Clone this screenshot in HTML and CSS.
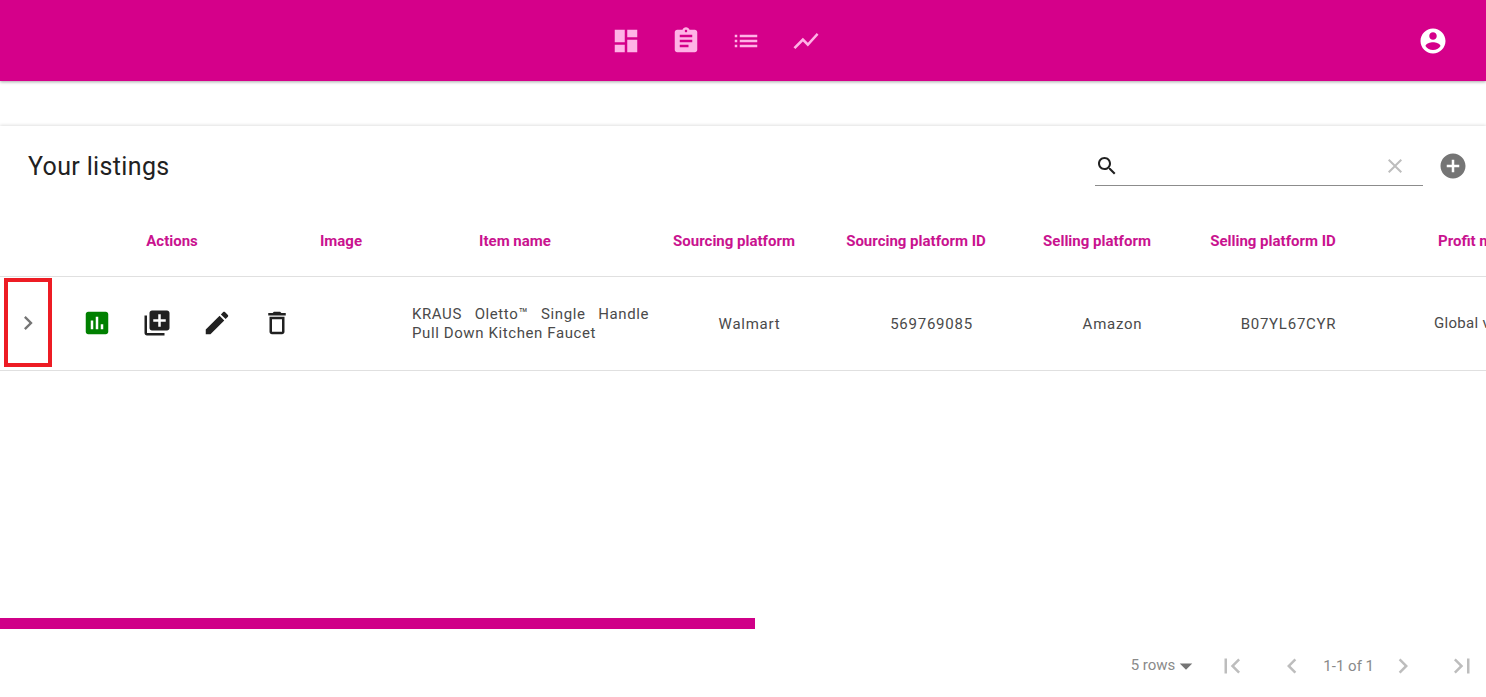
FILE: index.html
```html
<!DOCTYPE html>
<html lang="en">
<head>
    <meta charset="UTF-8">
    <meta name="viewport" content="width=device-width, initial-scale=1.0">
    <title>Your listings</title>
    <link rel="stylesheet" href="styles.css">
</head>
<body>
    <header class="navbar">
        <nav class="nav-links">
            <svg class="icon-lg" viewBox="0 0 24 24"><path d="M3 13h8V3H3v10zm0 8h8v-6H3v6zm10 0h8V11h-8v10zm0-18v6h8V3h-8z"/></svg>
            <svg class="icon-lg" viewBox="0 0 24 24"><path d="M19 3h-4.18C14.4 1.84 13.3 1 12 1c-1.3 0-2.4.84-2.82 2H5c-1.1 0-2 .9-2 2v14c0 1.1.9 2 2 2h14c1.1 0 2-.9 2-2V5c0-1.1-.9-2-2-2zm-7 0c.55 0 1 .45 1 1s-.45 1-1 1-1-.45-1-1 .45-1 1-1zm2 14H7v-2h7v2zm3-4H7v-2h10v2zm0-4H7V7h10v2z"/></svg>
            <svg class="icon-lg" viewBox="0 0 24 24"><path d="M3 13h2v-2H3v2zm0 4h2v-2H3v2zm0-8h2V7H3v2zm4 4h14v-2H7v2zm0 4h14v-2H7v2zM7 7v2h14V7H7z"/></svg>
            <svg class="icon-lg" viewBox="0 0 24 24"><path d="M3.5 18.49l6-6.01 4 4L22 6.92l-1.41-1.41-7.09 7.97-4-4L2 16.99z"/></svg>
        </nav>
        <svg class="icon-lg account-icon" viewBox="0 0 24 24"><path d="M12 2C6.48 2 2 6.48 2 12s4.48 10 10 10 10-4.48 10-10S17.52 2 12 2zm0 3c1.66 0 3 1.34 3 3s-1.34 3-3 3-3-1.34-3-3 1.34-3 3-3zm0 14.2c-2.5 0-4.71-1.28-6-3.22.03-1.99 4-3.08 6-3.08 1.99 0 5.97 1.09 6 3.08-1.29 1.94-3.5 3.22-6 3.22z"/></svg>
    </header>

    <main class="paper">
        <div class="toolbar">
            <h2 class="title">Your listings</h2>
            <div class="search-box">
                <svg class="icon" viewBox="0 0 24 24"><path d="M15.5 14h-.79l-.28-.27C15.41 12.59 16 11.11 16 9.5 16 5.91 13.09 3 9.5 3S3 5.91 3 9.5 5.91 16 9.5 16c1.61 0 3.09-.59 4.23-1.57l.27.28v.79l5 4.99L20.49 19l-4.99-5zm-6 0C7.01 14 5 11.99 5 9.5S7.01 5 9.5 5 14 7.01 14 9.5 11.99 14 9.5 14z"/></svg>
                <svg class="icon clear-icon" viewBox="0 0 24 24"><path d="M19 6.41L17.59 5 12 10.59 6.41 5 5 6.41 10.59 12 5 17.59 6.41 19 12 13.41 17.59 19 19 17.59 13.41 12z"/></svg>
            </div>
            <svg class="icon-lg add-icon" viewBox="0 0 24 24"><path d="M12 2C6.48 2 2 6.48 2 12s4.48 10 10 10 10-4.48 10-10S17.52 2 12 2zm5 11h-4v4h-2v-4H7v-2h4V7h2v4h4v2z"/></svg>
        </div>

        <div class="table-wrap">
            <table class="listings">
                <colgroup>
                    <col class="col-expand">
                    <col class="col-actions">
                    <col class="col-image">
                    <col class="col-name">
                    <col class="col-sourcing">
                    <col class="col-sourcing-id">
                    <col class="col-selling">
                    <col class="col-selling-id">
                    <col class="col-profit">
                </colgroup>
                <thead>
                    <tr>
                        <th></th>
                        <th>Actions</th>
                        <th>Image</th>
                        <th class="head-name">Item name</th>
                        <th class="head-shift">Sourcing platform</th>
                        <th class="head-shift">Sourcing platform ID</th>
                        <th class="head-shift">Selling platform</th>
                        <th class="head-shift">Selling platform ID</th>
                        <th class="head-profit">Profit margin</th>
                    </tr>
                </thead>
                <tbody>
                    <tr>
                        <td class="cell-expand">
                            <svg class="icon-expand" viewBox="0 0 24 24"><path d="M10 6L8.59 7.41 13.17 12l-4.58 4.59L10 18l6-6z"/></svg>
                            <span class="highlight-box"></span>
                        </td>
                        <td>
                            <div class="row-actions">
                                <svg class="icon-lg stats-icon" viewBox="0 0 24 24"><path d="M19 3H5c-1.1 0-2 .9-2 2v14c0 1.1.9 2 2 2h14c1.1 0 2-.9 2-2V5c0-1.1-.9-2-2-2zM9 17H7v-7h2v7zm4 0h-2V7h2v10zm4 0h-2v-4h2v4z"/></svg>
                                <svg class="icon-lg" viewBox="0 0 24 24"><path d="M4 6H2v14c0 1.1.9 2 2 2h14v-2H4V6zm16-4H8c-1.1 0-2 .9-2 2v12c0 1.1.9 2 2 2h12c1.1 0 2-.9 2-2V4c0-1.1-.9-2-2-2zm-1 9h-4v4h-2v-4H9V9h4V5h2v4h4v2z"/></svg>
                                <svg class="icon-lg" viewBox="0 0 24 24"><path d="M3 17.25V21h3.75L17.81 9.94l-3.75-3.75L3 17.25zM20.71 7.04c.39-.39.39-1.02 0-1.41l-2.34-2.34c-.39-.39-1.02-.39-1.41 0l-1.83 1.83 3.75 3.75 1.83-1.83z"/></svg>
                                <svg class="icon-lg" viewBox="0 0 24 24"><path d="M6 19c0 1.1.9 2 2 2h8c1.1 0 2-.9 2-2V7H6v12zM8 9h8v10H8V9zm7.5-5l-1-1h-5l-1 1H5v2h14V4z"/></svg>
                            </div>
                        </td>
                        <td></td>
                        <td class="cell-text cell-name">KRAUS Oletto™ Single Handle Pull Down Kitchen Faucet</td>
                        <td class="cell-text">Walmart</td>
                        <td class="cell-text">569769085</td>
                        <td class="cell-text">Amazon</td>
                        <td class="cell-text">B07YL67CYR</td>
                        <td class="cell-profit">Global value</td>
                    </tr>
                </tbody>
            </table>
        </div>

        <div class="scroll-track"><div class="scroll-thumb"></div></div>

        <div class="pagination">
            <span class="rows-select">5 rows</span>
            <svg class="icon-lg icon-drop" viewBox="0 0 24 24"><path d="M7 10l5 5 5-5z"/></svg>
            <svg class="icon-lg page-first" viewBox="0 0 24 24"><path d="M18.41 16.59L13.82 12l4.59-4.59L17 6l-6 6 6 6zM6 6h2v12H6z"/></svg>
            <svg class="icon-lg page-prev" viewBox="0 0 24 24"><path d="M15.41 7.41L14 6l-6 6 6 6 1.41-1.41L10.83 12z"/></svg>
            <span class="page-info">1-1 of 1</span>
            <svg class="icon-lg page-next" viewBox="0 0 24 24"><path d="M10 6L8.59 7.41 13.17 12l-4.58 4.59L10 18l6-6z"/></svg>
            <svg class="icon-lg page-last" viewBox="0 0 24 24"><path d="M5.59 7.41L10.18 12l-4.59 4.59L7 18l6-6-6-6zM16 6h2v12h-2z"/></svg>
        </div>
    </main>
</body>
</html>
```

FILE: styles.css
```css
:root {
    --primary: #d5008a;
    --nav-icon: #ffb3e6;
    --heading: #c9138f;
    --text-primary: #212121;
    --text-body: #4a4a4a;
    --text-muted: #8a8a8a;
    --border: #e0e0e0;
}

* {
    box-sizing: border-box;
    margin: 0;
    padding: 0;
}

body {
    font-family: Roboto, "Liberation Sans", sans-serif;
    background-color: #ffffff;
    color: var(--text-primary);
    height: 100vh;
    overflow: hidden;
}

svg {
    display: block;
    flex: none;
    fill: currentColor;
}

.icon {
    width: 24px;
    height: 24px;
}

.icon-lg {
    width: 30px;
    height: 30px;
}

/* Top bar */
.navbar {
    height: 81px;
    background-color: var(--primary);
    box-shadow: 0 1px 3px rgba(0,0,0,0.35);
    display: flex;
    align-items: center;
    justify-content: center;
    position: relative;
}

.nav-links {
    display: flex;
    gap: 30px;
    color: var(--nav-icon);
    margin-left: -54px;
}

.account-icon {
    position: absolute;
    right: 38px;
    top: 26px;
    color: #ffffff;
}

/* Card */
.paper {
    margin-top: 45px;
    height: 571px;
    box-shadow: 0 -1px 3px rgba(0,0,0,0.12);
    display: flex;
    flex-direction: column;
}

.toolbar {
    height: 80px;
    padding: 0 18px 0 28px;
    display: flex;
    align-items: center;
    flex: none;
}

.title {
    font-size: 25px;
    font-weight: 400;
    letter-spacing: 0.35px;
    flex: 1;
    padding-top: 1px;
}

.search-box {
    width: 328px;
    height: 38px;
    margin-top: 2px;
    border-bottom: 1px solid #8c8c8c;
    display: flex;
    align-items: center;
    justify-content: space-between;
    padding: 0 16px 1px 0;
    margin-right: 15px;
}

.clear-icon {
    color: #bdbdbd;
}

.add-icon {
    color: #757575;
}

/* Table */
.table-wrap {
    overflow: hidden;
    flex: none;
    height: 412px;
}

.listings {
    width: 1616px;
    table-layout: fixed;
    border-collapse: collapse;
}

.col-expand { width: 52px; }
.col-actions { width: 240px; }
.col-image { width: 98px; }
.col-name { width: 270px; }
.col-sourcing { width: 178px; }
.col-sourcing-id { width: 186px; }
.col-selling { width: 176px; }
.col-selling-id { width: 176px; }
.col-profit { width: 240px; }

.listings th {
    height: 70px;
    font-size: 15px;
    font-weight: 700;
    color: var(--heading);
    text-align: center;
    white-space: nowrap;
    border-bottom: 1px solid var(--border);
}

.listings th.head-name {
    padding-right: 20px;
}

.listings th.head-shift {
    padding-right: 30px;
}

.listings th.head-profit {
    text-align: left;
    padding-left: 62px;
}

.listings td {
    height: 94px;
    font-size: 15px;
    letter-spacing: 0.75px;
    color: var(--text-body);
    text-align: center;
    border-bottom: 1px solid var(--border);
}

.listings td.cell-text {
    padding: 2px 0 0 1px;
}

.listings td.cell-name {
    text-align: justify;
    line-height: 19px;
    padding: 2px 11px 0 22px;
    letter-spacing: 0.6px;
}

.listings td.cell-profit {
    text-align: left;
    letter-spacing: 0.3px;
    padding-left: 58px;
    white-space: nowrap;
}

.cell-expand {
    position: relative;
}

.icon-expand {
    width: 28px;
    height: 28px;
    color: #757575;
    margin-left: 14px;
}

.highlight-box {
    position: absolute;
    left: 4px;
    top: 1px;
    width: 48px;
    height: 89px;
    border: 4px solid #ed1c24;
}

.row-actions {
    display: flex;
    gap: 30px;
    padding-left: 30px;
    color: var(--text-primary);
}

.stats-icon {
    color: #008000;
}

/* Bottom scroll bar and pager */
.scroll-track {
    height: 11px;
    flex: none;
}

.scroll-thumb {
    width: 755px;
    height: 100%;
    background-color: #d00088;
}

.pagination {
    flex: 1;
    display: flex;
    align-items: center;
    justify-content: flex-end;
    padding: 6px 9px 0 0;
    font-size: 15px;
    color: var(--text-muted);
}

.rows-select {
    margin-top: -2px;
}

.pagination .icon-lg {
    color: #bdbdbd;
}

.pagination .icon-drop {
    color: #757575;
    margin-left: -4px;
}

.page-first {
    margin-left: 16px;
}

.page-prev {
    margin-left: 30px;
}

.page-info {
    margin-left: 16px;
}

.page-next {
    margin-left: 14px;
}

.page-last {
    margin-left: 29px;
}
```
